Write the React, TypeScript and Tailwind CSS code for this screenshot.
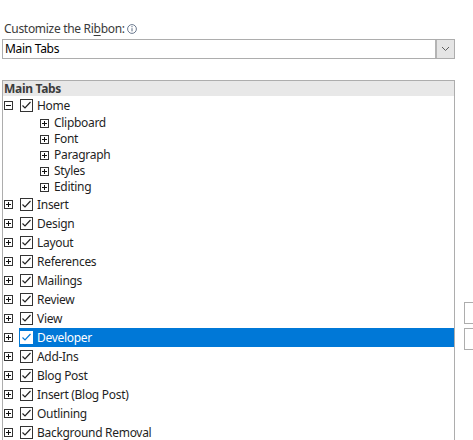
import React from 'react';

type Row = { label: string; level: 0 | 1; expanded?: boolean; checked?: boolean; selected?: boolean };

const rows: Row[] = [
  { label: 'Home', level: 0, expanded: true, checked: true },
  { label: 'Clipboard', level: 1 },
  { label: 'Font', level: 1 },
  { label: 'Paragraph', level: 1 },
  { label: 'Styles', level: 1 },
  { label: 'Editing', level: 1 },
  { label: 'Insert', level: 0, checked: true },
  { label: 'Design', level: 0, checked: true },
  { label: 'Layout', level: 0, checked: true },
  { label: 'References', level: 0, checked: true },
  { label: 'Mailings', level: 0, checked: true },
  { label: 'Review', level: 0, checked: true },
  { label: 'View', level: 0, checked: true },
  { label: 'Developer', level: 0, checked: true, selected: true },
  { label: 'Add-Ins', level: 0, checked: true },
  { label: 'Blog Post', level: 0, checked: true },
  { label: 'Insert (Blog Post)', level: 0, checked: true },
  { label: 'Outlining', level: 0, checked: true },
  { label: 'Background Removal', level: 0, checked: true },
];

const Expander: React.FC<{ open?: boolean }> = ({ open }) => (
  <svg width="9" height="9" viewBox="0 0 9 9" className="shrink-0">
    <rect x="0.5" y="0.5" width="8" height="8" fill="white" stroke="#333333" />
    <path d="M2 4.5h5" stroke="#111111" />
    {!open && <path d="M4.5 2v5" stroke="#111111" />}
  </svg>
);

const Check: React.FC<{ selected?: boolean }> = ({ selected }) => (
  <svg width="13" height="13" viewBox="0 0 13 13" className="shrink-0">
    <rect x="0.5" y="0.5" width="12" height="12" fill="white" stroke={selected ? '#ffffff' : '#333333'} />
    <path d="M2.5 6.5l2.5 2.5l5.5-6" fill="none" stroke={selected ? '#0078d7' : '#222222'} strokeWidth="1.2" />
  </svg>
);

const App: React.FC = () => {
  return (
    <div className="w-[473px] h-[440px] overflow-hidden bg-white text-[12px] tracking-[-0.3px] text-[#1f1f1f]" style={{ fontFamily: '"Segoe UI", "Noto Sans", sans-serif' }}>
      {/* Label */}
      <div className="pt-[21px] pl-[4px] h-[39px] flex items-start text-[#3a3a3a] leading-[16px]">
        <span>
          Customize the Ri<span className="underline underline-offset-2">b</span>bon:
        </span>
        <svg width="10" height="10" viewBox="0 0 10 10" className="ml-[2px] mt-[3px]">
          <circle cx="5" cy="5" r="4.4" fill="none" stroke="#5b6b82" strokeWidth="0.9" />
          <path d="M5 4.2v3.2" stroke="#5b6b82" strokeWidth="1" />
          <circle cx="5" cy="2.7" r="0.6" fill="#5b6b82" />
        </svg>
      </div>

      {/* Combo box */}
      <div className="ml-[2px] w-[453px] h-[20px] border border-[#adadad] flex items-stretch">
        <div className="flex-1 pl-[2px] leading-[18px] text-black">Main Tabs</div>
        <div className="w-[19px] bg-[#e5e5e5] border-l-2 border-[#b4b4b4] flex items-center justify-center">
          <svg width="9" height="6" viewBox="0 0 9 6">
            <path d="M1 1l3.5 3.5L8 1" fill="none" stroke="#606060" />
          </svg>
        </div>
      </div>

      {/* Tree + side buttons */}
      <div className="mt-[21px] flex">
        <div className="shrink-0 ml-[2px] w-[453px] h-[400px] border border-b-0 border-[#adadad]">
          <div className="h-[15px] bg-[#e8e8e8] pl-[1px] font-bold leading-[15px] text-[#3c3c3c]">Main Tabs</div>
          {rows.map((r) =>
            r.level === 1 ? (
              <div key={r.label} className="h-[16px] flex items-center pl-[37px]">
                <Expander />
                <span className="ml-[5px] leading-[16px]">{r.label}</span>
              </div>
            ) : (
              <div key={r.label} className="h-[19px] flex items-center pl-[1px]">
                <Expander open={r.expanded} />
                <div className={`ml-[6px] flex items-center h-[19px] flex-1 pl-[1px] ${r.selected ? 'bg-[#0078d7] text-white' : ''}`}>
                  <Check selected={r.selected} />
                  <span className="ml-[4px] leading-[19px]">{r.label}</span>
                </div>
              </div>
            )
          )}
        </div>
        <div className="shrink-0 ml-[9px] mt-[222px] flex flex-col gap-[4px]">
          <div className="w-[20px] h-[22px] border border-[#adadad] bg-white" />
          <div className="w-[20px] h-[22px] border border-[#adadad] bg-white" />
        </div>
      </div>
    </div>
  );
};

export default App;
